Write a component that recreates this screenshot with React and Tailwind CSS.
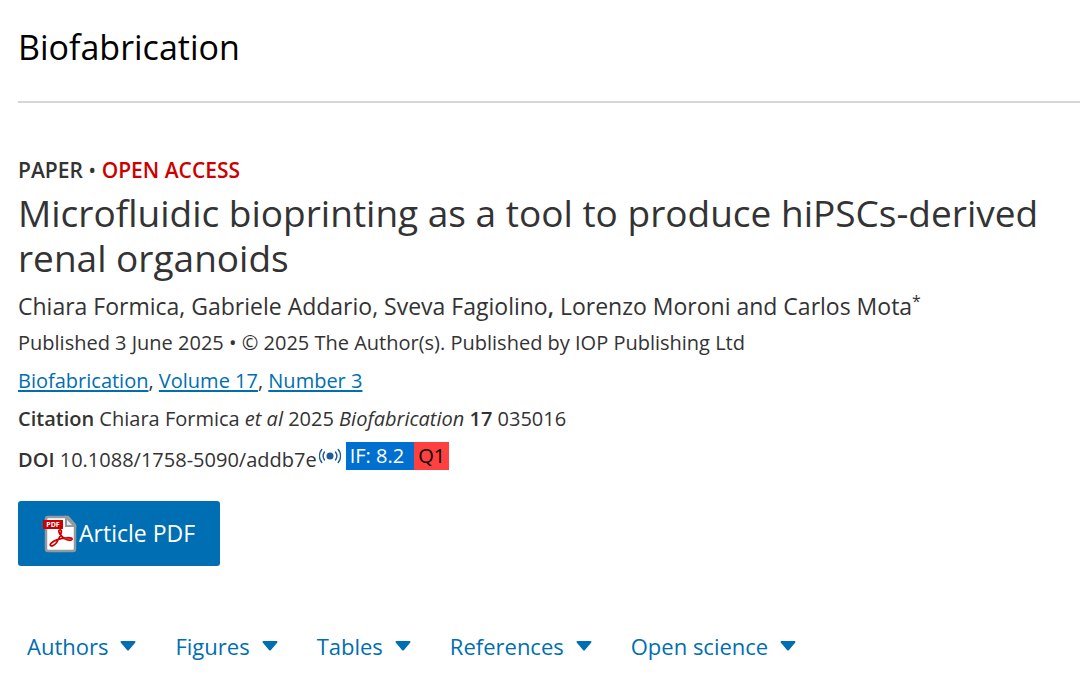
// src/App.jsx
const SECTIONS = ['Authors', 'Figures', 'Tables', 'References', 'Open science'];

function PdfIcon() {
  return (
    <svg width="34" height="38" viewBox="0 0 34 38" className="shrink-0" aria-hidden="true">
      <path d="M5 2h20l7 8v24a2 2 0 0 1-2 2H5a2 2 0 0 1-2-2V4a2 2 0 0 1 2-2z" fill="#fff" stroke="#929a9f" strokeWidth="2.5" />
      <path d="M23 2.500v8.500h8.500z" fill="#e8ebed" stroke="#929a9f" strokeWidth="2" />
      <rect y="5" width="20" height="9" fill="#cc0000" />
      <text x="10" y="12" textAnchor="middle" fontSize="7" fontWeight="700" fill="#fff" fontFamily="Open Sans, sans-serif">
        PDF
      </text>
      <path
        d="M16.500 15c2.200-.8 2.200 1.500 1.200 4.500C16 24 12.500 30 9.500 30.800c-2.200.6-3-1-1.500-2.500 3-3 10-5.100 16-5.500 3.500-.2 5.500.4 5 1.500-.8 1.600-4.500 1-7-.6-3.200-2-5.600-5-6.100-7-.2-.9 0-1.400.6-1.700z"
        fill="none"
        stroke="#cc0000"
        strokeWidth="1.800"
      />
    </svg>
  );
}

function SignalIcon() {
  return (
    <svg width="22" height="16" viewBox="-1 0 22 16" fill="none" stroke="#1f5b96" strokeWidth="1.400" strokeLinecap="round" aria-hidden="true">
      <circle cx="10" cy="8" r="3.500" fill="#1f5b96" stroke="none" />
      <path d="M4.500 4a7 7 0 0 0 0 8M15.500 4a7 7 0 0 1 0 8M1.800 1.500a10 10 0 0 0 0 13M18.200 1.500a10 10 0 0 1 0 13" />
    </svg>
  );
}

function Caret() {
  return (
    <svg width="16" height="10" viewBox="0 0 16 10" fill="#006eb2" aria-hidden="true">
      <path d="M1.500 0h13c1 0 1.300 1 .6 1.700L9 9a1.400 1.400 0 0 1-2 0L.9 1.700C.2 1 .5 0 1.500 0z" />
    </svg>
  );
}

function IssueLink({ children }) {
  return (
    <a href="#issue" className="text-[#006eb2] underline decoration-2 underline-offset-2">
      {children}
    </a>
  );
}

export default function App() {
  return (
    <div className="pl-[18px] font-['Open_Sans',sans-serif] text-xl text-[#333]">
      <header className="border-b-2 border-[#d6d6d6] pt-6 pb-[30px]">
        <p className="text-[34px] leading-[47px] text-black">Biofabrication</p>
      </header>

      <main className="pt-[51px]">
        <p className="text-[21px] leading-8 font-semibold">
          PAPER <span className="font-normal">•</span> <span className="text-[#cc0000]">OPEN ACCESS</span>
        </p>
        <h1 className="pt-1 pr-4 text-[37px] leading-[45px]">
          Microfluidic bioprinting as a tool to produce hiPSCs-derived renal organoids
        </h1>
        <p className="pt-2 text-[23px] leading-9">
          Chiara Formica, Gabriele Addario, Sveva Fagiolino<b className="font-semibold">,</b> Lorenzo Moroni and Carlos Mota
          <sup className="text-base">*</sup>
        </p>
        <p className="leading-[38px]">Published 3 June 2025 • © 2025 The Author(s). Published by IOP Publishing Ltd</p>
        <p className="leading-[38px]">
          <IssueLink>Biofabrication</IssueLink>, <IssueLink>Volume 17</IssueLink>, <IssueLink>Number 3</IssueLink>
        </p>
        <p className="leading-[38px]">
          <b className="font-semibold">Citation</b> Chiara Formica <i>et al</i> 2025 <i>Biofabrication</i>{' '}
          <b className="font-semibold">17</b> 035016
        </p>
        <div className="flex h-[42px] items-center pb-[6px]">
          <p className="pt-2 pr-[2px]">
            <b className="font-semibold">DOI</b> 10.1088/1758-5090/addb7e
          </p>
          <SignalIcon />
          <span className="ml-[5px] flex leading-7">
            <span className="bg-[#0070d0] pr-[10px] pl-1 text-white">IF: 8.2</span>
            <span className="bg-[#ff4040] px-1 text-black">Q1</span>
          </span>
        </div>

        <a href="#pdf" className="mt-[21px] inline-flex h-[65px] items-center rounded-[3px] bg-[#006eb2] px-[25px] text-[23px] text-white">
          <PdfIcon />
          <span className="pl-[2px]">Article PDF</span>
        </a>

        <nav className="flex gap-[39px] pt-16 pl-[9px]">
          {SECTIONS.map((name) => (
            <button key={name} type="button" className="flex items-center gap-3 text-[22px] leading-8 text-[#006eb2]">
              {name}
              <Caret />
            </button>
          ))}
        </nav>
      </main>
    </div>
  );
}
